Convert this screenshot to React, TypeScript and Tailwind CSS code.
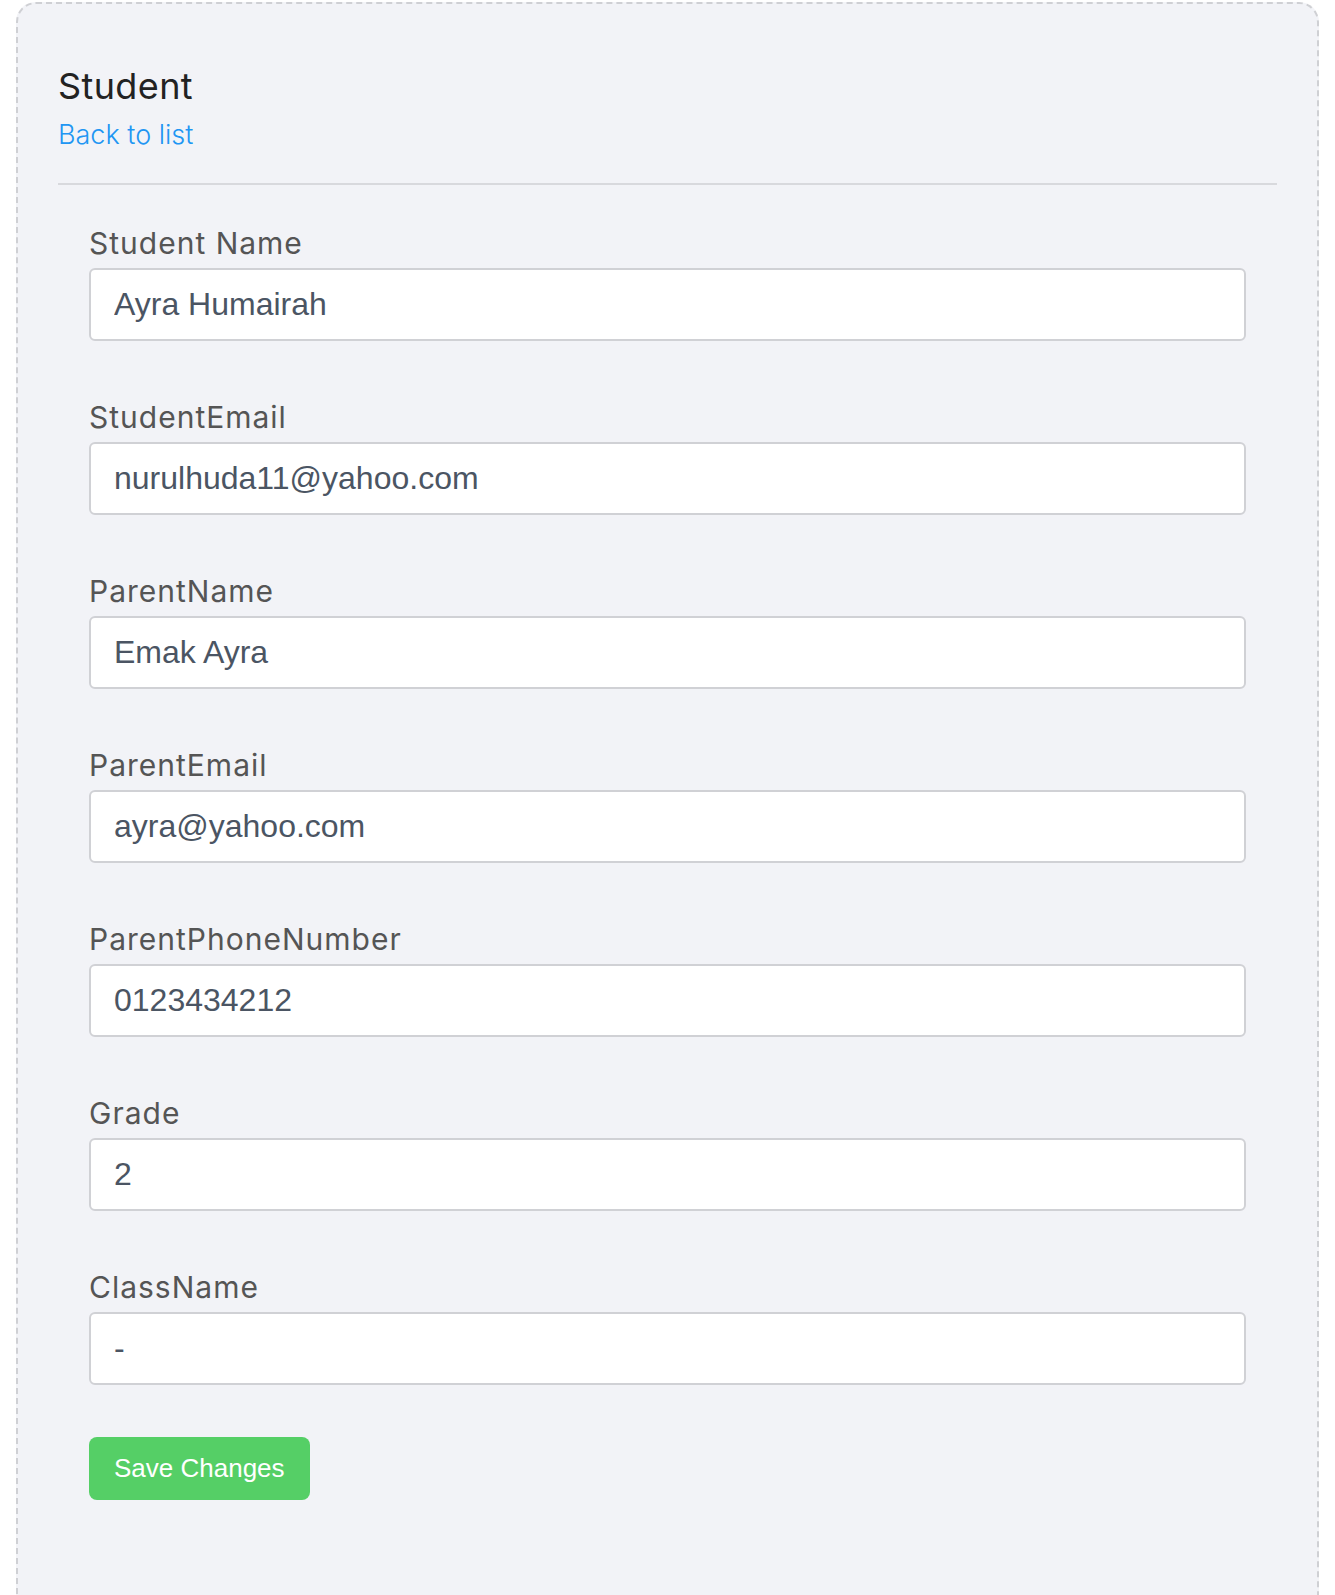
import { useState } from 'react';

const fields = [
  { key: 'studentName', label: 'Student Name', value: 'Ayra Humairah' },
  { key: 'studentEmail', label: 'StudentEmail', value: 'nurulhuda11@yahoo.com' },
  { key: 'parentName', label: 'ParentName', value: 'Emak Ayra' },
  { key: 'parentEmail', label: 'ParentEmail', value: 'ayra@yahoo.com' },
  { key: 'parentPhone', label: 'ParentPhoneNumber', value: '0123434212' },
  { key: 'grade', label: 'Grade', value: '2' },
  { key: 'className', label: 'ClassName', value: '-' },
];

const App = () => {
  const [values, setValues] = useState<Record<string, string>>(
    Object.fromEntries(fields.map((f) => [f.key, f.value]))
  );

  return (
    <div className="min-h-[1595px] bg-white pl-[16px] pt-[2px] font-['Inter',sans-serif]">
      <div className="w-[1303px] min-h-[1700px] rounded-[20px] border-2 border-dashed border-[#cfd0d4] bg-[#f2f3f7] px-[40px] pt-[60px]">
        <h1 className="text-[36px] leading-[44px] tracking-[0.4px] text-[#222222]">Student</h1>
        <a href="#" className="mt-[10px] block w-fit text-[27px] font-light leading-[34px] text-[#2196f3]">
          Back to list
        </a>
        <hr className="mt-[31px] border-t-2 border-[#d8d9dd]" />

        <form className="px-[31px] pt-[41px]" onSubmit={(e) => e.preventDefault()}>
          {fields.map((f) => (
            <div key={f.key} className="mb-[59px]">
              <label htmlFor={f.key} className="block text-[30px] leading-[34px] tracking-[1px] text-[#555555]">
                {f.label}
              </label>
              <input
                id={f.key}
                value={values[f.key]}
                onChange={(e) => setValues({ ...values, [f.key]: e.target.value })}
                className="mt-[8px] block h-[73px] w-full rounded-[6px] border-2 border-[#d0d1d5] bg-white px-[23px] font-['Liberation_Sans',Arial,sans-serif] text-[32px] text-[#4b5563] outline-none"
              />
            </div>
          ))}
          <button
            type="submit"
            className="-mt-[7px] h-[63px] rounded-[8px] bg-[#55cf66] px-[25px] font-['Liberation_Sans',Arial,sans-serif] text-[26px] text-white"
          >
            Save Changes
          </button>
        </form>
      </div>
    </div>
  );
};

export default App;
